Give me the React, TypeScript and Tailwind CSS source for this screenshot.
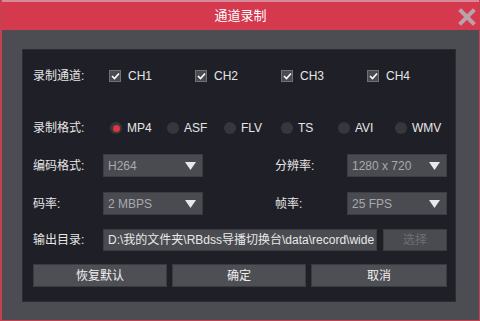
import React from "react";

const FONT = { fontFamily: '"Liberation Sans", "Noto Sans CJK SC", sans-serif' };

function Check({ label }: { label: string }) {
  return (
    <div className="flex items-center w-[86px] shrink-0">
      <div className="w-[12px] h-[12px] bg-[#4a4b50] border border-[#707176] flex items-center justify-center">
        <svg width="9" height="8" viewBox="0 0 9 8">
          <path d="M1 4 L3.5 6.5 L8 1.5" stroke="#ffffff" strokeWidth="1.6" fill="none" />
        </svg>
      </div>
      <span className="ml-[7px] text-[12px] text-[#e6e6e6]">{label}</span>
    </div>
  );
}

function Radio({ label, on }: { label: string; on?: boolean }) {
  return (
    <div className="flex items-center w-[57px] shrink-0">
      <div className="w-[12px] h-[12px] rounded-full bg-[#36373d] flex items-center justify-center">
        {on && <div className="w-[7px] h-[7px] rounded-full bg-[#e0353f]" />}
      </div>
      <span className="ml-[5px] text-[12px] text-[#e6e6e6]">{label}</span>
    </div>
  );
}

function Select({ value }: { value: string }) {
  return (
    <div className="w-[100px] h-[23px] bg-[#4a4b51] border border-[#3c3d43] flex items-center justify-between pl-[4px] pr-[6px]">
      <span className="text-[12px] text-[#a9a9ad]">{value}</span>
      <svg width="11" height="8" viewBox="0 0 11 8">
        <path d="M0 0 L11 0 L5.5 8 Z" fill="#e8e8ea" />
      </svg>
    </div>
  );
}

function Btn({ label, w }: { label: string; w: string }) {
  return (
    <div className={`${w} h-[23px] bg-[#4e4f55] border border-[#3a3b41] flex items-center justify-center text-[12px] text-[#f0f0f0]`}>
      {label}
    </div>
  );
}

export default function App() {
  return (
    <div
      className="w-[480px] h-[321px] bg-[#4b4d53] border-l-2 border-r border-b border-[#c8404f] flex flex-col overflow-hidden"
      style={FONT}
    >
      <div className="h-[30px] shrink-0 bg-[#d5394e] border-t-2 border-[#d98a98] relative flex items-center justify-center">
        <span className="text-[13px] text-white">通道录制</span>
        <svg className="absolute right-[3px] top-[6px]" width="18" height="18" viewBox="0 0 18 18">
          <path d="M3 3 L15 15 M15 3 L3 15" stroke="#b8a3aa" strokeWidth="4" strokeLinecap="square" />
        </svg>
      </div>
      <div className="flex-1 pt-[19px] pl-[20px] pr-[23px] pb-[18px]">
        <div className="h-full bg-[#1f2027] border border-[#2c2d34] pl-[10px] pr-[8px] pt-[15px] flex flex-col text-[12px] text-[#e6e6e6]">
          <div className="h-[22px] flex items-center">
            <span className="w-[76px] shrink-0">录制通道:</span>
            <Check label="CH1" />
            <Check label="CH2" />
            <Check label="CH3" />
            <Check label="CH4" />
          </div>
          <div className="h-[22px] mt-[30px] flex items-center">
            <span className="w-[77px] shrink-0">录制格式:</span>
            <Radio label="MP4" on />
            <Radio label="ASF" />
            <Radio label="FLV" />
            <Radio label="TS" />
            <Radio label="AVI" />
            <Radio label="WMV" />
          </div>
          <div className="h-[23px] mt-[15px] flex items-center">
            <span className="w-[70px] shrink-0">编码格式:</span>
            <Select value="H264" />
            <span className="ml-[72px] w-[72px] shrink-0">分辨率:</span>
            <Select value="1280 x 720" />
          </div>
          <div className="h-[23px] mt-[15px] flex items-center">
            <span className="w-[70px] shrink-0">码率:</span>
            <Select value="2 MBPS" />
            <span className="ml-[72px] w-[72px] shrink-0">帧率:</span>
            <Select value="25 FPS" />
          </div>
          <div className="h-[22px] mt-[14px] flex items-center">
            <span className="w-[70px] shrink-0">输出目录:</span>
            <div className="w-[274px] h-[22px] bg-[#4a4b51] border border-[#3c3d43] flex items-center pl-[4px] overflow-hidden whitespace-nowrap text-[#e8e8e8]">
              D:\我的文件夹\RBdss导播切换台\data\record\wide
            </div>
            <div className="ml-[6px] w-[64px] h-[22px] bg-[#4a4b51] border border-[#3c3d43] flex items-center justify-center text-[#6e6f74]">
              选择
            </div>
          </div>
          <div className="mt-[13px] flex items-center gap-[5px]">
            <Btn label="恢复默认" w="w-[134px]" />
            <Btn label="确定" w="w-[134px]" />
            <Btn label="取消" w="w-[136px]" />
          </div>
        </div>
      </div>
    </div>
  );
}
